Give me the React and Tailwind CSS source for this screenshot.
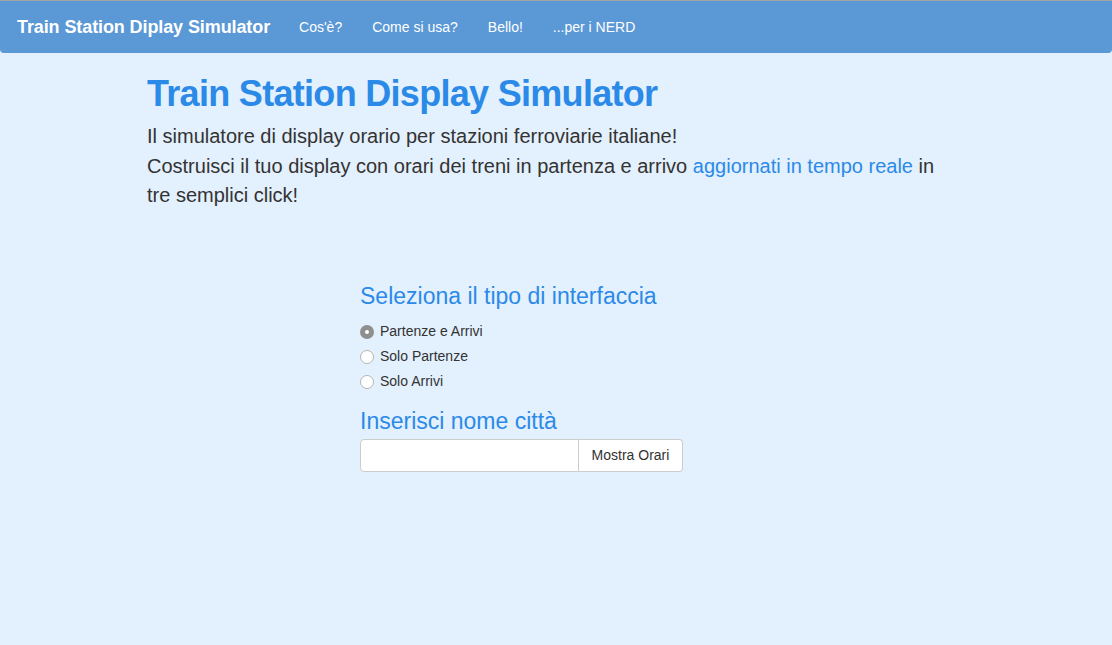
import React, { useState } from "react";

const App = () => {
    const [tipo, setTipo] = useState("pa");
    const [citta, setCitta] = useState("");

    const opzioni = [
        { id: "pa", label: "Partenze e Arrivi" },
        { id: "p", label: "Solo Partenze" },
        { id: "a", label: "Solo Arrivi" },
    ];

    return (
        <div className="min-h-[645px] bg-[#e3f0fd] text-[#333333] font-['Liberation_Sans',Arial,sans-serif]">
            <div className="border-t border-[#a3a3a3]">
                <nav className="h-[52px] bg-[#5a98d6] rounded-b-[4px] flex items-center px-[17px] pt-[1px]">
                    <a href="#" className="text-white font-bold text-[18px] tracking-[-0.1px] mr-[29px]">
                        Train Station Diplay Simulator
                    </a>
                    <ul className="flex items-center text-white text-[14px]">
                        <li className="mr-[30px]"><a href="#">Cos'è?</a></li>
                        <li className="mr-[30px]"><a href="#">Come si usa?</a></li>
                        <li className="mr-[30px]"><a href="#">Bello!</a></li>
                        <li><a href="#">...per i NERD</a></li>
                    </ul>
                </nav>
            </div>

            <div className="pl-[147px] pr-[155px] pt-[21px]">
                <h1 className="text-[36px] leading-[40px] font-bold text-[#2b8ae8] tracking-[-0.7px]">
                    Train Station Display Simulator
                </h1>
                <p className="mt-[8px] text-[20px] leading-[29.5px]">
                    Il simulatore di display orario per stazioni ferroviarie italiane!
                    <br />
                    Costruisci il tuo display con orari dei treni in partenza e arrivo{" "}
                    <a href="#" className="text-[#2b8ae8]">aggiornati in tempo reale</a> in tre semplici click!
                </p>
            </div>

            <div className="pl-[360px] pt-[72px]">
                <h3 className="text-[23px] leading-[26px] text-[#2b8ae8]">Seleziona il tipo di interfaccia</h3>
                <div className="mt-[13px] flex flex-col gap-[5px] text-[14px]">
                    {opzioni.map((o) => (
                        <label key={o.id} className="flex items-center h-[20px] cursor-pointer">
                            <span
                                className={
                                    o.id === tipo
                                        ? "w-[14px] h-[14px] rounded-full bg-[#8f8f8f] flex items-center justify-center mr-[6px]"
                                        : "w-[14px] h-[14px] rounded-full bg-white border border-[#b5b5b5] mr-[6px]"
                                }
                                onClick={() => setTipo(o.id)}
                            >
                                {o.id === tipo && <span className="w-[4px] h-[4px] rounded-full bg-white"></span>}
                            </span>
                            {o.label}
                        </label>
                    ))}
                </div>
                <h3 className="mt-[16px] text-[23px] leading-[26px] text-[#2b8ae8]">Inserisci nome città</h3>
                <div className="mt-[5px] flex w-[323px] h-[33px]">
                    <input
                        type="text"
                        value={citta}
                        onChange={(e) => setCitta(e.target.value)}
                        className="w-[219px] h-full bg-white border border-[#cccccc] rounded-l-[4px] px-2 text-[14px] outline-none"
                    />
                    <button className="flex-1 h-full bg-white border border-l-0 border-[#cccccc] rounded-r-[4px] text-[14px] text-[#333]">
                        Mostra Orari
                    </button>
                </div>
            </div>
        </div>
    );
};

export default App;
